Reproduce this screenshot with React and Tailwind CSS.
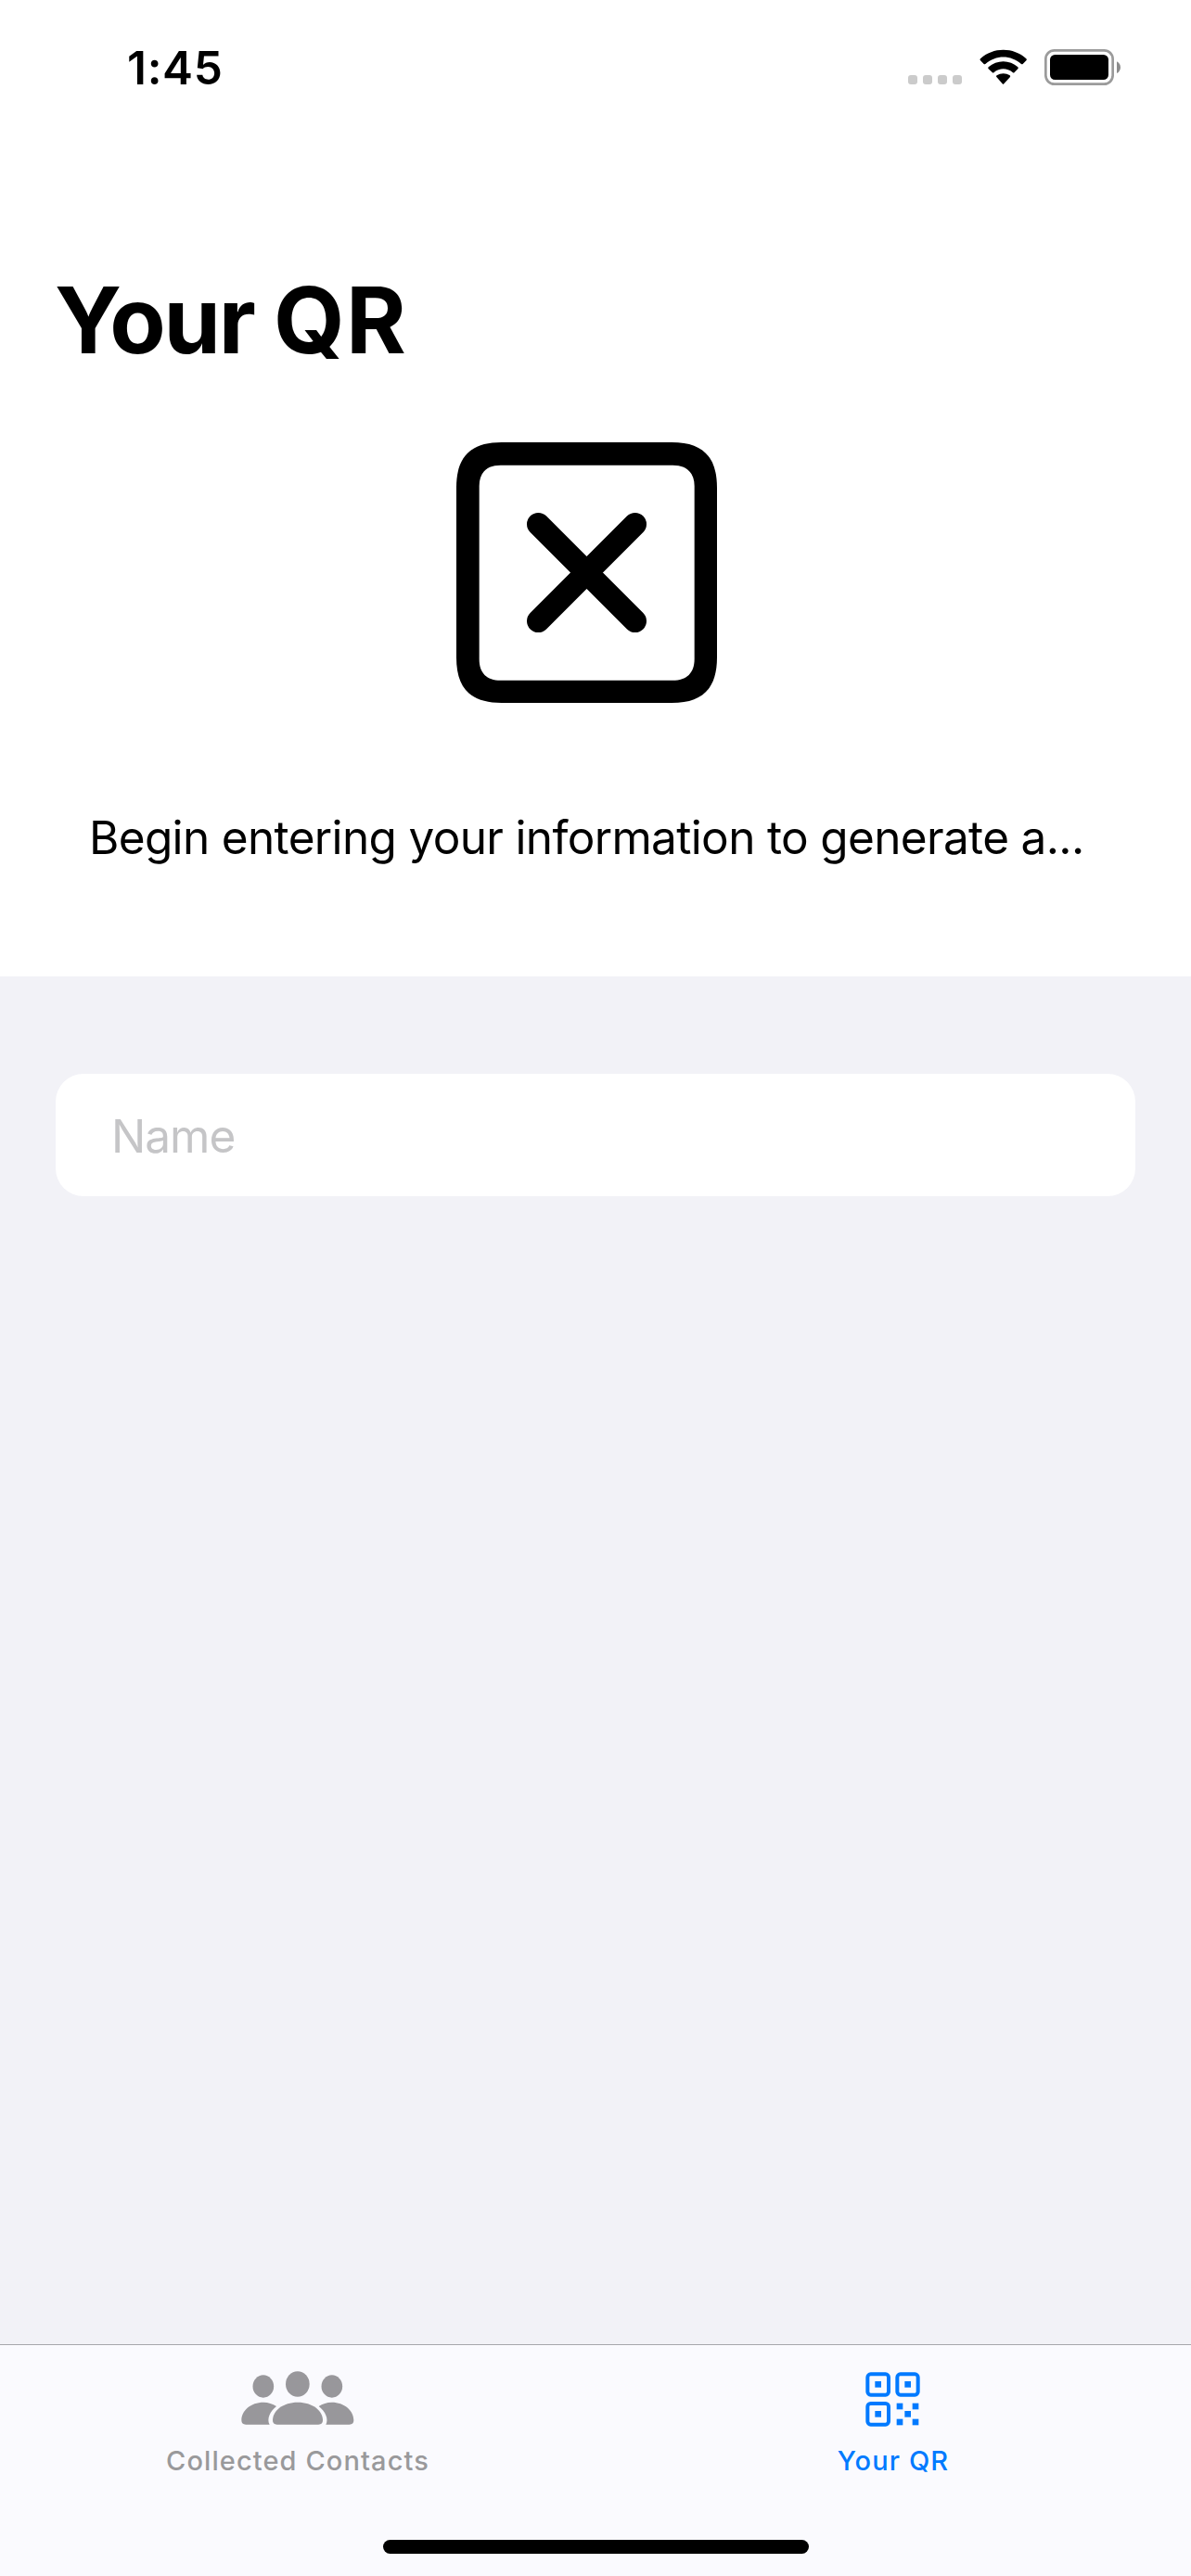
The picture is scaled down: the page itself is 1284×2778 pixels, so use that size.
function CellularDots() {
  return (
    <div className="mt-[81px] flex gap-[6px]">
      <span className="size-[10px] rounded-[3px] bg-[#cbcbcb]" />
      <span className="size-[10px] rounded-[3px] bg-[#cbcbcb]" />
      <span className="size-[10px] rounded-[3px] bg-[#cbcbcb]" />
      <span className="size-[10px] rounded-[3px] bg-[#cbcbcb]" />
    </div>
  );
}

function WifiIcon() {
  return (
    <svg className="mt-[52px] ml-[18px] h-[41px] w-[53px]" viewBox="285 66 159 123">
      <path d="M291 106Q288 103 291 100C332 62 398 62 439 100Q442 103 439 106L428 117Q426 119 423 117C389 87 341 87 307 117Q304 119 302 117Z" />
      <path d="M317 133Q314 130 317 127C344 103 386 103 412 127Q415 130 412 133L401 144Q398 147 395 144C377 129 353 129 335 144Q332 147 329 144Z" />
      <path d="M343 159Q340 156 344 154C356 146 374 146 386 154Q389 156 387 159L367 181Q365 184 362 181Z" />
    </svg>
  );
}

function BatteryIcon() {
  return (
    <svg className="mt-[53px] ml-[18px] h-[39px] w-[82px]" viewBox="498 69 246 117">
      <rect x="502" y="73" width="217" height="109" rx="28" fill="none" stroke="#9b9b9b" strokeWidth="8" />
      <rect x="516" y="87" width="189" height="81" rx="16" />
      <path d="M732 109C748 117 748 139 732 147Z" fill="#8c8c8c" />
    </svg>
  );
}

function SquareX() {
  return (
    <svg className="h-[281px] w-[281px]" viewBox="66 51 843 843">
      <path
        fillRule="evenodd"
        d="M66 198C66 98 112 51 212 51H763C863 51 909 98 909 198V747C909 847 863 894 763 894H212C112 894 66 847 66 747ZM140 193V752C140 797 164 821 209 821H766C811 821 836 797 836 752V193C836 149 811 125 766 125H209C164 125 140 149 140 193Z"
      />
      <path d="M331 316L644 629M644 316L331 629" stroke="#000" strokeWidth="74" strokeLinecap="round" />
    </svg>
  );
}

function PeopleIcon() {
  return (
    <svg className="h-[58px] w-[122px]" viewBox="299 142 366 174" fill="#98979b">
      <ellipse cx="370.500" cy="191.500" rx="34" ry="36.500" />
      <ellipse cx="592.500" cy="191.500" rx="34" ry="36.500" />
      <ellipse cx="481.500" cy="184" rx="38.500" ry="41.500" />
      <path d="M401 301C401 270 434 243 482 243C530 243 563 270 563 301Q563 315 549 315H415Q401 315 401 301Z" />
      <path d="M314 315Q300 315 300 301C300 270 330 243 371 243C387 243 401 248 413 256C392 272 381 298 391 315Z" />
      <path d="M649 315Q663 315 663 301C663 270 633 243 592 243C576 243 562 248 550 256C571 272 583 298 573 315Z" />
    </svg>
  );
}

function QrIcon() {
  return (
    <svg className="mr-[2px] h-[59px] w-[59px]" viewBox="218 145 177 177" fill="#007aff">
      <g fill="none" stroke="#007aff" strokeWidth="12">
        <rect x="225" y="152" width="68" height="67" rx="10" />
        <rect x="321" y="152" width="67" height="67" rx="10" />
        <rect x="225" y="247" width="68" height="68" rx="10" />
      </g>
      <rect x="249" y="175" width="20" height="20" />
      <rect x="345" y="175" width="20" height="20" />
      <rect x="249" y="271" width="20" height="20" />
      <rect x="319" y="246" width="20" height="20" />
      <rect x="370" y="246" width="20" height="20" />
      <rect x="345" y="271" width="20" height="20" />
      <rect x="319" y="297" width="20" height="20" />
      <rect x="370" y="297" width="20" height="20" />
    </svg>
  );
}

export default function App() {
  return (
    <div className="flex h-[2778px] w-[1284px] flex-col overflow-hidden bg-[#f2f2f7] font-['Inter',sans-serif] text-black">
      <header className="flex h-[1053px] shrink-0 flex-col bg-white">
        <div className="flex h-[141px] shrink-0 items-start justify-between pr-[76px] pl-[137px]">
          <time className="mt-[43px] text-[49.5px] leading-[60px] font-semibold tracking-[0.7px]">1:45</time>
          <div className="flex items-start">
            <CellularDots />
            <WifiIcon />
            <BatteryIcon />
          </div>
        </div>
        <h1 className="mt-[144px] ml-[59px] text-[98.7px] leading-[120px] font-bold tracking-[-2.2px] whitespace-nowrap">
          Your <span className="tracking-[1.5px]">QR</span>
        </h1>
        <div className="mt-[72px] ml-[492px] h-[281px]">
          <SquareX />
        </div>
        <p className="mt-[115px] ml-[96px] text-[49.5px] leading-[60px] tracking-[-0.66px] whitespace-nowrap">
          Begin entering your information to generate a...
        </p>
      </header>

      <main className="flex-1 px-[60px] pt-[105px]">
        <div className="flex h-[132px] items-center rounded-[30px] bg-white pt-px pl-[60px]">
          <input
            className="w-full bg-transparent text-[49.5px] leading-[60px] tracking-[-1px] outline-none placeholder:text-[#c5c5c7] placeholder:opacity-100"
            placeholder="Name"
            aria-label="Name"
          />
        </div>
      </main>

      <nav className="flex h-[250px] shrink-0 flex-col items-center border-t border-[#a7a7ab] bg-[#fafafe]">
        <div className="grid w-full grid-cols-2 text-[29px] leading-[36px] font-medium">
          <a className="flex flex-col items-center pt-[28px] text-[#99999b]">
            <PeopleIcon />
            <span className="mt-[21px] tracking-[1.1px]">Collected Contacts</span>
          </a>
          <a className="flex flex-col items-center pt-[29px] text-[#007aff]">
            <QrIcon />
            <span className="mt-[19px] tracking-[1.1px]">Your QR</span>
          </a>
        </div>
        <div className="mt-[67px] h-[15px] w-[459px] rounded-full bg-black" />
      </nav>
    </div>
  );
}
